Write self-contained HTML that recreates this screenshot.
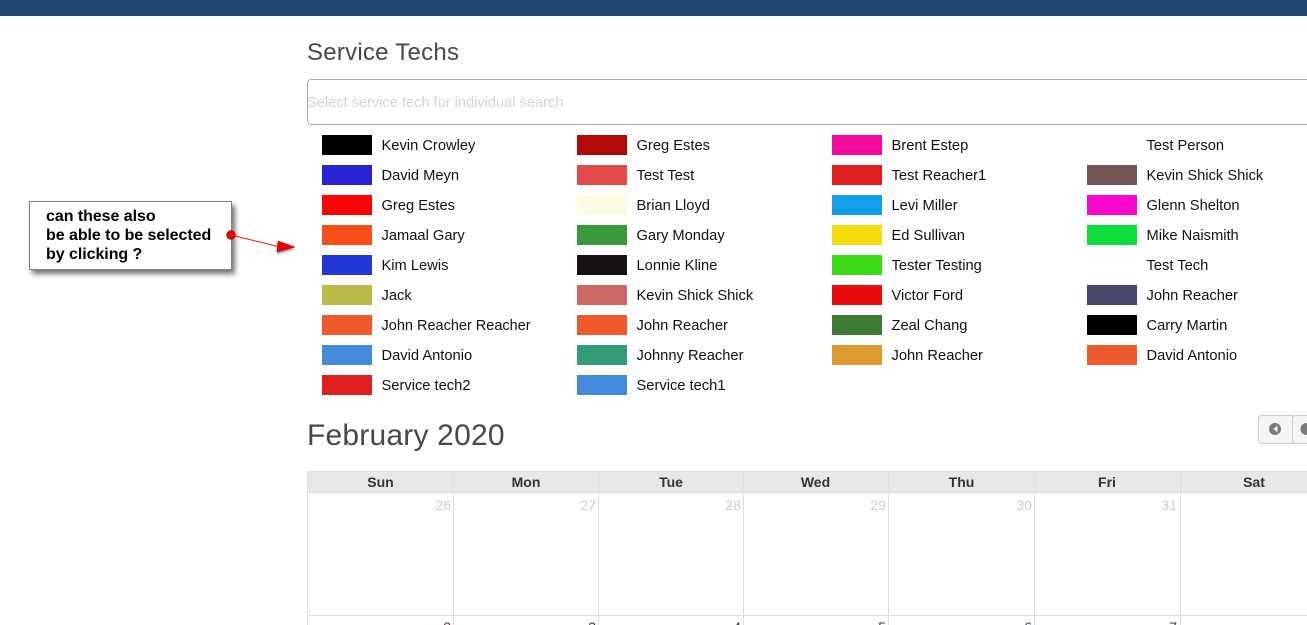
<!DOCTYPE html>
<html style="width:1307px;height:625px;overflow:hidden;"><head><meta charset="utf-8">
<style>
html,body{margin:0;padding:0;background:#fff;}
body{width:1307px;height:625px;overflow:hidden;position:relative;font-family:"Liberation Sans",sans-serif;}
#w{position:absolute;left:0;top:0;width:1307px;height:625px;overflow:hidden;}
.a{position:absolute;}
.s{position:absolute;width:50px;height:20px;}
.t{position:absolute;font-size:14.7px;line-height:20px;color:#111;white-space:nowrap;margin-top:1px;margin-left:.5px;}
.v{position:absolute;top:471px;width:1px;height:154px;background:#ddd;}
.h{position:absolute;top:472px;height:20px;line-height:20px;text-align:center;font-weight:bold;font-size:14px;color:#333;}
.d{position:absolute;top:497px;text-align:right;font-size:14px;line-height:16px;color:#ccc;width:30px;}
.n{position:absolute;top:619px;text-align:right;font-size:14px;line-height:16px;color:#333;width:30px;}
</style></head><body><div id="w">
<div class="a" style="left:0;top:0;width:1307px;height:16px;background:#224672;"></div>

<div class="a" style="left:307px;top:38px;font-size:24px;line-height:30px;color:#484848;letter-spacing:.25px;">Service Techs</div>
<div class="a" style="left:307px;top:79px;width:1010px;height:44px;border:1px solid #aaa;border-radius:4px;"></div>
<div class="a" style="left:307px;top:93px;font-size:14.6px;line-height:20px;color:#d4d4d4;">Select service tech for individual search</div>

<div class="s" style="left:322px;top:135px;background:#000000"></div><div class="t" style="left:381px;top:135px">Kevin Crowley</div>
<div class="s" style="left:322px;top:165px;background:#2a23d2"></div><div class="t" style="left:381px;top:165px">David Meyn</div>
<div class="s" style="left:322px;top:195px;background:#fb0508"></div><div class="t" style="left:381px;top:195px">Greg Estes</div>
<div class="s" style="left:322px;top:225px;background:#f65018"></div><div class="t" style="left:381px;top:225px">Jamaal Gary</div>
<div class="s" style="left:322px;top:255px;background:#2138d6"></div><div class="t" style="left:381px;top:255px">Kim Lewis</div>
<div class="s" style="left:322px;top:285px;background:#b8bb49"></div><div class="t" style="left:381px;top:285px">Jack</div>
<div class="s" style="left:322px;top:315px;background:#ee5a2c"></div><div class="t" style="left:381px;top:315px;font-size:14.5px">John Reacher Reacher</div>
<div class="s" style="left:322px;top:345px;background:#448bdb"></div><div class="t" style="left:381px;top:345px">David Antonio</div>
<div class="s" style="left:322px;top:375px;background:#df2020"></div><div class="t" style="left:381px;top:375px">Service tech2</div>

<div class="s" style="left:577px;top:135px;background:#b30808"></div><div class="t" style="left:636px;top:135px">Greg Estes</div>
<div class="s" style="left:577px;top:165px;background:#e24a4a"></div><div class="t" style="left:636px;top:165px">Test Test</div>
<div class="s" style="left:577px;top:195px;background:#fbfce2"></div><div class="t" style="left:636px;top:195px">Brian Lloyd</div>
<div class="s" style="left:577px;top:225px;background:#3a993d"></div><div class="t" style="left:636px;top:225px">Gary Monday</div>
<div class="s" style="left:577px;top:255px;background:#181212"></div><div class="t" style="left:636px;top:255px">Lonnie Kline</div>
<div class="s" style="left:577px;top:285px;background:#cc6868"></div><div class="t" style="left:636px;top:285px">Kevin Shick Shick</div>
<div class="s" style="left:577px;top:315px;background:#ee5a2c"></div><div class="t" style="left:636px;top:315px">John Reacher</div>
<div class="s" style="left:577px;top:345px;background:#319b75"></div><div class="t" style="left:636px;top:345px">Johnny Reacher</div>
<div class="s" style="left:577px;top:375px;background:#448bdb"></div><div class="t" style="left:636px;top:375px">Service tech1</div>

<div class="s" style="left:832px;top:135px;background:#f40ca0"></div><div class="t" style="left:891px;top:135px">Brent Estep</div>
<div class="s" style="left:832px;top:165px;background:#e02020"></div><div class="t" style="left:891px;top:165px">Test Reacher1</div>
<div class="s" style="left:832px;top:195px;background:#149deb"></div><div class="t" style="left:891px;top:195px">Levi Miller</div>
<div class="s" style="left:832px;top:225px;background:#f5dc0f"></div><div class="t" style="left:891px;top:225px">Ed Sullivan</div>
<div class="s" style="left:832px;top:255px;background:#3cda18"></div><div class="t" style="left:891px;top:255px">Tester Testing</div>
<div class="s" style="left:832px;top:285px;background:#e90c0c"></div><div class="t" style="left:891px;top:285px">Victor Ford</div>
<div class="s" style="left:832px;top:315px;background:#3f7a35"></div><div class="t" style="left:891px;top:315px">Zeal Chang</div>
<div class="s" style="left:832px;top:345px;background:#de9830"></div><div class="t" style="left:891px;top:345px">John Reacher</div>

<div class="t" style="left:1146px;top:135px">Test Person</div>
<div class="s" style="left:1087px;top:165px;background:#735655"></div><div class="t" style="left:1146px;top:165px">Kevin Shick Shick</div>
<div class="s" style="left:1087px;top:195px;background:#fb06cf"></div><div class="t" style="left:1146px;top:195px">Glenn Shelton</div>
<div class="s" style="left:1087px;top:225px;background:#0fdd3d"></div><div class="t" style="left:1146px;top:225px">Mike Naismith</div>
<div class="t" style="left:1146px;top:255px">Test Tech</div>
<div class="s" style="left:1087px;top:285px;background:#45466c"></div><div class="t" style="left:1146px;top:285px">John Reacher</div>
<div class="s" style="left:1087px;top:315px;background:#000000"></div><div class="t" style="left:1146px;top:315px">Carry Martin</div>
<div class="s" style="left:1087px;top:345px;background:#ee5a2c"></div><div class="t" style="left:1146px;top:345px">David Antonio</div>

<div class="a" style="left:307px;top:418px;font-size:30px;line-height:36px;color:#484848;letter-spacing:.2px;">February 2020</div>

<div class="a" style="left:1258px;top:415px;width:33px;height:27px;background:#f5f5f5;border:1px solid #ccc;border-radius:4px 0 0 4px;"></div>
<div class="a" style="left:1292px;top:415px;width:30px;height:27px;background:#f5f5f5;border:1px solid #ccc;border-radius:4px;"></div>
<svg class="a" style="left:1258px;top:415px" width="49" height="29">
<circle cx="17" cy="14" r="6" fill="#7b7b7b"/><path d="M19.500 10.500v7l-4-3.500z" fill="#f5f5f5"/>
<circle cx="48.500" cy="14" r="6" fill="#7b7b7b"/>
</svg>

<div class="a" style="left:307px;top:471px;width:1000px;height:22px;background:#e8e8e8;border-top:1px solid #ddd;border-bottom:1px solid #ddd;box-sizing:border-box;"></div>
<div class="a" style="left:307px;top:615px;width:1000px;height:1px;background:#ddd;"></div>
<div class="v" style="left:307px"></div><div class="v" style="left:453px"></div><div class="v" style="left:598px"></div><div class="v" style="left:743px"></div><div class="v" style="left:888px"></div><div class="v" style="left:1034px"></div><div class="v" style="left:1180px"></div>

<div class="h" style="left:308px;width:145px">Sun</div>
<div class="h" style="left:454px;width:144px">Mon</div>
<div class="h" style="left:599px;width:144px">Tue</div>
<div class="h" style="left:744px;width:143px">Wed</div>
<div class="h" style="left:889px;width:145px">Thu</div>
<div class="h" style="left:1035px;width:144px">Fri</div>
<div class="h" style="left:1181px;width:146px">Sat</div>

<div class="d" style="left:421px">26</div>
<div class="d" style="left:566px">27</div>
<div class="d" style="left:711px">28</div>
<div class="d" style="left:856px">29</div>
<div class="d" style="left:1002px">30</div>
<div class="d" style="left:1147px">31</div>

<div class="n" style="left:421px;color:#8a2a2a">2</div>
<div class="n" style="left:566px">3</div>
<div class="n" style="left:711px">4</div>
<div class="n" style="left:856px">5</div>
<div class="n" style="left:1002px;color:#1f4a7a">6</div>
<div class="n" style="left:1147px">7</div>

<div class="a" style="left:29px;top:201px;width:203px;height:69px;box-sizing:border-box;background:#fff;border:1px solid #808080;box-shadow:3px 4px 5px rgba(0,0,0,.55);"></div>
<div class="a" style="left:46px;top:207px;font-size:16px;letter-spacing:-.05px;line-height:19px;font-weight:bold;color:#000;white-space:nowrap;">can these also<br>be able to be selected<br>by clicking ?</div>

<svg class="a" style="left:220px;top:225px" width="85" height="35">
<path d="M11 10 L60 22" stroke="#f01010" stroke-width="1" fill="none"/>
<path d="M58 16 L75 22 L57 27 Z" fill="#e80000" stroke="#c00000" stroke-width=".5" style="filter:drop-shadow(0 2px 1px rgba(0,0,0,.4))"/>
<circle cx="11" cy="10" r="4.500" fill="#e80000" stroke="#b00000" stroke-width=".5"/>
</svg>
</div></body></html>
